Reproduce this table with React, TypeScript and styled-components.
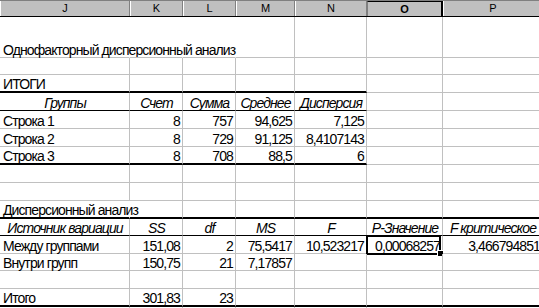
import styled, { createGlobalStyle, css } from "styled-components";

const GlobalStyle = createGlobalStyle`
  html, body {
    margin: 0;
    padding: 0;
    background: #fff;
  }
  body {
    font-family: "Liberation Sans", Arial, sans-serif;
  }
  * {
    box-sizing: border-box;
  }
`;

type Align = "l" | "r" | "c";
type Edge = "thick" | "thin";

interface CellDef {
  t?: string;
  a?: Align;
  i?: boolean;
  open?: boolean;
  sel?: boolean;
}

interface RowDef {
  h: number;
  edge?: Edge;
  span?: number;
  cells: CellDef[];
}

const COLUMNS = [
  { name: "J", w: 130 },
  { name: "K", w: 53 },
  { name: "L", w: 53 },
  { name: "M", w: 59 },
  { name: "N", w: 72 },
  { name: "O", w: 76, active: true },
  { name: "P", w: 100 },
];

const txt = (t: string, a: Align = "l"): CellDef => ({ t, a });
const num = (t: string): CellDef => ({ t, a: "r" });
const head = (t: string): CellDef => ({ t, a: "c", i: true });

const ROWS: RowDef[] = [
  {
    h: 41,
    cells: [
      { t: "Однофакторный дисперсионный анализ", open: true },
      { open: true },
      { open: true },
    ],
  },
  { h: 17, cells: [] },
  { h: 18, edge: "thick", span: 5, cells: [txt("ИТОГИ")] },
  {
    h: 18,
    edge: "thin",
    span: 5,
    cells: [head("Группы"), head("Счет"), head("Сумма"), head("Среднее"), head("Дисперсия")],
  },
  { h: 18, cells: [txt("Строка 1"), num("8"), num("757"), num("94,625"), num("7,125")] },
  { h: 18, cells: [txt("Строка 2"), num("8"), num("729"), num("91,125"), num("8,4107143")] },
  {
    h: 18,
    edge: "thick",
    span: 5,
    cells: [txt("Строка 3"), num("8"), num("708"), num("88,5"), num("6")],
  },
  { h: 18, cells: [] },
  { h: 18, cells: [] },
  {
    h: 18,
    edge: "thick",
    span: 7,
    cells: [{ t: "Дисперсионный анализ", open: true }],
  },
  {
    h: 17,
    edge: "thin",
    span: 7,
    cells: [
      head("Источник вариации"),
      head("SS"),
      head("df"),
      head("MS"),
      head("F"),
      head("P-Значение"),
      head("F критическое"),
    ],
  },
  {
    h: 18,
    cells: [
      txt("Между группами"),
      num("151,08"),
      num("2"),
      num("75,5417"),
      num("10,523217"),
      { t: "0,00068257", a: "r", sel: true },
      num("3,466794851"),
    ],
  },
  { h: 17, cells: [txt("Внутри групп"), num("150,75"), num("21"), num("7,17857")] },
  { h: 18, cells: [] },
  { h: 18, edge: "thick", span: 7, cells: [txt("Итого"), num("301,83"), num("23")] },
  { h: 18, cells: [] },
];

const Sheet = styled.div`
  width: 539px;
  height: 308px;
  overflow: hidden;
  display: flex;
  flex-direction: column;
  background: #fff;
  color: #000;
`;

const HeaderRow = styled.div`
  display: flex;
  flex: none;
  height: 17px;
  border-top: 1px solid #808080;
  border-bottom: 1px solid #000;
  background: #c0c0c0;
`;

const HeaderCell = styled.div<{ $w: number; $active?: boolean }>`
  flex: none;
  width: ${(p) => p.$w}px;
  height: 15px;
  display: flex;
  align-items: center;
  justify-content: center;
  font-size: 11px;
  line-height: 1;
  border-left: 1px solid #fff;
  border-right: 1px solid #808080;
  ${(p) =>
    p.$active &&
    css`
      font-weight: bold;
      border-left-color: #808080;
      border-right: 2px solid #000;
      border-top: 1px solid #000;
    `}
`;

const Row = styled.div<{ $h: number }>`
  display: flex;
  flex: none;
  height: ${(p) => p.$h}px;
`;

const edgeStyle = (edge?: Edge) => {
  if (edge === "thick") return "2px solid #000";
  if (edge === "thin") return "1px solid #000";
  return "1px solid #c0c0c0";
};

const justify = { l: "flex-start", r: "flex-end", c: "center" };

const Cell = styled.div<{
  $w: number;
  $align: Align;
  $italic?: boolean;
  $edge?: Edge;
  $open?: boolean;
  $sel?: boolean;
}>`
  position: relative;
  flex: none;
  width: ${(p) => p.$w}px;
  height: 100%;
  display: flex;
  align-items: flex-end;
  justify-content: ${(p) => justify[p.$align]};
  padding: 0 2px 0 3px;
  border-right: 1px solid ${(p) => (p.$open ? "transparent" : "#c0c0c0")};
  border-bottom: ${(p) => edgeStyle(p.$edge)};
  font-size: 14px;
  letter-spacing: -0.9px;
  line-height: 14px;
  font-style: ${(p) => (p.$italic ? "italic" : "normal")};
  white-space: nowrap;
  ${(p) =>
    p.$align === "c" &&
    css`
      padding: 0 0 0 1px;
    `}
  ${(p) =>
    p.$sel &&
    css`
      &::before {
        content: "";
        position: absolute;
        left: -1px;
        top: -1px;
        right: 1px;
        bottom: -2px;
        border: 2px solid #000;
      }
      &::after {
        content: "";
        position: absolute;
        right: -2px;
        bottom: -4px;
        width: 5px;
        height: 5px;
        background: #000;
        border: 1px solid #fff;
      }
    `}
`;

export default function App() {
  return (
    <>
      <GlobalStyle />
      <Sheet>
        <HeaderRow>
          {COLUMNS.map((c) => (
            <HeaderCell key={c.name} $w={c.w} $active={c.active}>
              {c.name}
            </HeaderCell>
          ))}
        </HeaderRow>
        {ROWS.map((row, r) => (
          <Row key={r} $h={row.h}>
            {COLUMNS.map((col, c) => {
              const cell = row.cells[c] ?? {};
              const edge = row.edge && c < (row.span ?? 0) ? row.edge : undefined;
              return (
                <Cell
                  key={col.name}
                  $w={col.w}
                  $align={cell.a ?? "l"}
                  $italic={cell.i}
                  $edge={edge}
                  $open={cell.open}
                  $sel={cell.sel}
                >
                  {cell.t && <span>{cell.t}</span>}
                </Cell>
              );
            })}
          </Row>
        ))}
      </Sheet>
    </>
  );
}
